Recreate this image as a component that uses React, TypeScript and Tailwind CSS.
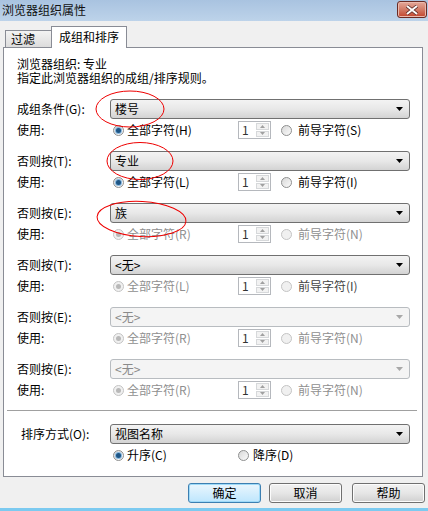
import React from "react";

interface RowConfig {
  label: string;
  value: string;
  selectEnabled: boolean;
  allText: string;
  leadText: string;
  allEnabled: boolean;
  leadDark: boolean;
  checked: boolean;
}

const ROWS: RowConfig[] = [
  { label: "成组条件(G):", value: "楼号", selectEnabled: true, allText: "全部字符(H)", leadText: "前导字符(S)", allEnabled: true, leadDark: true, checked: true },
  { label: "否则按(T):", value: "专业", selectEnabled: true, allText: "全部字符(L)", leadText: "前导字符(I)", allEnabled: true, leadDark: true, checked: true },
  { label: "否则按(E):", value: "族", selectEnabled: true, allText: "全部字符(R)", leadText: "前导字符(N)", allEnabled: false, leadDark: false, checked: true },
  { label: "否则按(T):", value: "<无>", selectEnabled: true, allText: "全部字符(L)", leadText: "前导字符(I)", allEnabled: false, leadDark: true, checked: true },
  { label: "否则按(E):", value: "<无>", selectEnabled: false, allText: "全部字符(R)", leadText: "前导字符(N)", allEnabled: false, leadDark: false, checked: true },
  { label: "否则按(E):", value: "<无>", selectEnabled: false, allText: "全部字符(R)", leadText: "前导字符(N)", allEnabled: false, leadDark: false, checked: true },
];

const Radio: React.FC<{ checked?: boolean; disabled?: boolean }> = ({
  checked,
  disabled,
}) => (
  <span
    className={
      "relative inline-block w-[11px] h-[11px] rounded-full border shrink-0 " +
      (disabled
        ? "border-[#c4c4c4] bg-[#f0f0f0]"
        : "border-[#8e8f8f] bg-gradient-to-br from-[#d8d8d8] to-[#fbfbfb]")
    }
  >
    {checked && (
      <span
        className={
          "absolute left-[2px] top-[2px] w-[5px] h-[5px] rounded-full " +
          (disabled ? "bg-[#b8b8b8]" : "bg-[#1d5585] shadow-[0_0_0_1px_#86b7df]")
        }
      />
    )}
  </span>
);

const Select: React.FC<{ value: string; enabled: boolean }> = ({
  value,
  enabled,
}) => (
  <div
    className={
      "w-[300px] h-[20px] rounded-[3px] border flex items-center justify-between pl-[4px] pr-[6px] " +
      (enabled
        ? "border-[#707070] bg-gradient-to-b from-[#f3f3f3] via-[#e8e8e8] to-[#d3d3d3] text-black"
        : "border-[#b8bcc0] bg-[#f4f4f4] text-[#8a8a8a]")
    }
  >
    <span>{value}</span>
    <svg width="7" height="4" viewBox="0 0 7 4">
      <path d="M0 0h7L3.5 4z" fill={enabled ? "#000" : "#a8a8a8"} />
    </svg>
  </div>
);

const Spin: React.FC = () => (
  <div className="w-[33px] h-[18px] border border-[#b5b8bd] bg-white flex items-stretch">
    <span className="flex-1 pl-[3px] leading-[16px] text-[#333]">1</span>
    <div className="w-[13px] my-[1px] mr-[1px] flex flex-col gap-[1px]">
      <div className="flex-1 border border-[#d6d8da] bg-[#f2f2f2] flex items-center justify-center">
        <svg width="5" height="3" viewBox="0 0 5 3">
          <path d="M0 3h5L2.5 0z" fill="#a0a0a0" />
        </svg>
      </div>
      <div className="flex-1 border border-[#d6d8da] bg-[#f2f2f2] flex items-center justify-center">
        <svg width="5" height="3" viewBox="0 0 5 3">
          <path d="M0 0h5L2.5 3z" fill="#a0a0a0" />
        </svg>
      </div>
    </div>
  </div>
);

const Button: React.FC<{ label: string; focused?: boolean }> = ({
  label,
  focused,
}) => (
  <div
    className={
      "w-[73px] h-[20px] rounded-[3px] border flex items-center justify-center " +
      (focused
        ? "border-[#3c7fb1] bg-gradient-to-b from-[#eaf6fd] to-[#bee6fd] shadow-[inset_0_0_0_1px_#9edaf8]"
        : "border-[#707070] bg-gradient-to-b from-[#f2f2f2] via-[#e6e6e6] to-[#d0d0d0] shadow-[inset_0_0_0_1px_#fcfcfc]")
    }
  >
    {label}
  </div>
);

const GroupRow: React.FC<{ row: RowConfig }> = ({ row }) => (
  <div className="mb-[11px]">
    <div className="h-[20px] flex items-center">
      <span className="w-[106px] shrink-0 pl-[13px]">{row.label}</span>
      <Select value={row.value} enabled={row.selectEnabled} />
    </div>
    <div className="mt-[1px] h-[20px] flex items-center">
      <span className="w-[109px] shrink-0 pl-[13px]">使用:</span>
      <Radio checked={row.checked} disabled={!row.allEnabled} />
      <span
        className={"ml-[3px] w-[111px] shrink-0 " + (row.allEnabled ? "text-black" : "text-[#8f8f8f]")}
      >
        {row.allText}
      </span>
      <Spin />
      <span className="ml-[10px] flex">
        <Radio disabled={!row.allEnabled} />
      </span>
      <span
        className={"ml-[6px] " + (row.allEnabled ? "text-black" : row.leadDark ? "text-[#444]" : "text-[#8f8f8f]")}
      >
        {row.leadText}
      </span>
    </div>
  </div>
);

export default function App() {
  return (
    <div className="relative w-[428px] h-[511px] bg-[#f0f0f0] overflow-hidden font-['Noto_Sans_CJK_SC',sans-serif] text-[12px] leading-[14px] text-black">
      {/* title bar */}
      <div className="h-[21px] bg-gradient-to-b from-[#a9c3e0] to-[#bdd3ea] flex items-start justify-between">
        <span className="pl-[2px] pt-[3px] text-[12px] text-[#111]">浏览器组织属性</span>
        <div className="mt-[1px] mr-[1px] w-[30px] h-[17px] rounded-[3px] border border-[#6a2b24] bg-gradient-to-b from-[#e4a899] via-[#d27b67] to-[#c2432c] flex items-center justify-center shadow-[inset_0_0_0_1px_#eab9ad]">
          <svg width="12" height="10" viewBox="0 0 12 10">
            <path d="M1 1L11 9M11 1L1 9" stroke="#5a2a26" strokeWidth="3.4" />
            <path d="M1 1L11 9M11 1L1 9" stroke="#fff" strokeWidth="2" />
          </svg>
        </div>
      </div>

      {/* tabs */}
      <div className="pt-[5px] pl-[5px] flex items-end h-[26px]">
        <div className="w-[47px] h-[17px] border border-b-0 border-[#898c95] bg-gradient-to-b from-[#f3f3f3] to-[#dcdcdc] pl-[5px] leading-[16px]">
          过滤
        </div>
        <div className="relative z-10 -ml-[1px] w-[76px] h-[22px] -mb-[1px] border border-b-0 border-[#898c95] bg-white pl-[7px] leading-[20px]">
          成组和排序
        </div>
      </div>

      {/* panel */}
      <div className="ml-[3px] w-[420px] h-[430px] border border-[#898c95] bg-white">
        <div className="pt-[9px] pl-[13px] leading-[14px]">
          <div>浏览器组织: 专业</div>
          <div>指定此浏览器组织的成组/排序规则。</div>
        </div>
        <div className="mt-[14px]">
          {ROWS.map((row, i) => (
            <GroupRow key={i} row={row} />
          ))}
        </div>
        <div className="-mt-[1px] ml-[3px] mr-[5px] h-px bg-[#a0a0a0]" />
        <div className="mt-[13px] h-[20px] flex items-center">
          <span className="w-[106px] shrink-0 pl-[17px]">排序方式(O):</span>
          <Select value="视图名称" enabled />
        </div>
        <div className="mt-[1px] h-[20px] flex items-center pl-[109px]">
          <Radio checked />
          <span className="ml-[3px] w-[111px] shrink-0">升序(C)</span>
          <Radio />
          <span className="ml-[4px]">降序(D)</span>
        </div>
      </div>

      {/* buttons */}
      <div className="mt-[6px] pl-[188px] flex gap-[8px]">
        <Button label="确定" focused />
        <Button label="取消" />
        <div className="ml-[2px]">
          <Button label="帮助" />
        </div>
      </div>

      {/* window frame bottom */}
      <div className="absolute left-0 right-0 bottom-0 h-[3px] bg-[#7ccaf0]" />

      {/* hand-drawn red annotations */}
      <svg className="absolute left-0 top-0 pointer-events-none" width="428" height="511">
        <ellipse cx="130" cy="109" rx="34" ry="18" fill="none" stroke="#ee0000" strokeWidth="1" />
        <ellipse cx="140" cy="161" rx="33" ry="18.5" fill="none" stroke="#ee0000" strokeWidth="1" />
        <ellipse cx="141.5" cy="219" rx="44.5" ry="17.5" fill="none" stroke="#ee0000" strokeWidth="1" transform="rotate(3 141.5 219)" />
      </svg>
    </div>
  );
}
